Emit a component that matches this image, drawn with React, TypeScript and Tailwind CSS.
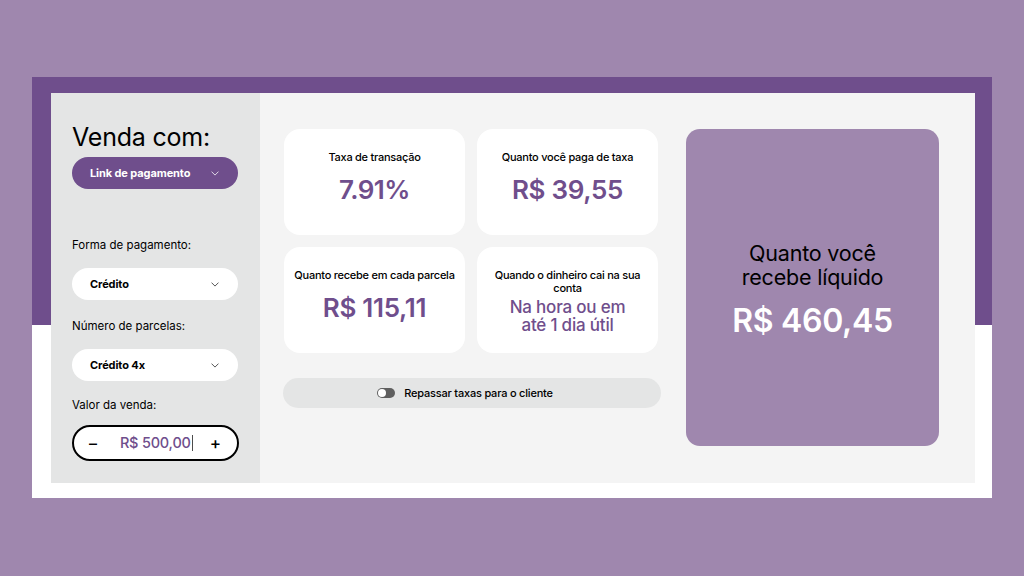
import React from "react";

const PURPLE = "text-[#6f4e8c]";

function Chevron({ className = "" }: { className?: string }) {
  return (
    <svg
      className={`w-[8px] h-[5px] ${className}`}
      viewBox="0 0 10 6"
      fill="none"
      stroke="currentColor"
      strokeWidth={1.2}
      strokeLinecap="round"
      strokeLinejoin="round"
    >
      <path d="M1 1l4 4 4-4" />
    </svg>
  );
}

function SelectPill({ label, dark }: { label: string; dark?: boolean }) {
  return (
    <div
      className={`w-[166px] h-[32px] rounded-full flex items-center justify-between pl-[18px] pr-[19px] ${
        dark ? "bg-[#6f4e8c] text-white" : "bg-white text-black"
      }`}
    >
      <span className="text-[11px] font-bold tracking-[-0.1px]">{label}</span>
      <Chevron className={dark ? "text-white/80" : "text-black/70"} />
    </div>
  );
}

function InfoCard({ title, children }: { title: React.ReactNode; children: React.ReactNode }) {
  return (
    <div className="bg-white rounded-[16px] h-[106px] flex flex-col items-center pt-[22px] px-1 text-center">
      <p className="text-[11px] font-medium text-black leading-[13px] tracking-[-0.25px] whitespace-nowrap">
        {title}
      </p>
      {children}
    </div>
  );
}

export default function App() {
  return (
    <div
      className="w-[1024px] h-[576px] bg-[#9f87ae] pt-[77px] pl-[32px]"
      style={{ fontFamily: "Inter, 'Noto Sans', sans-serif" }}
    >
      <div className="w-[960px] h-[421px] bg-[linear-gradient(to_bottom,#6f4e8c_248px,#ffffff_248px)] pt-[16px] pl-[19px]">
        <div className="w-[924px] h-[390px] bg-[#f4f4f4] flex">
          {/* Sidebar */}
          <aside className="w-[209px] bg-[#e4e5e5] pl-[21px] pt-[28px] flex flex-col">
            <h1 className="text-[25px] leading-[32px] text-black font-normal tracking-[-0.2px]">
              Venda com:
            </h1>
            <div className="mt-[4px]">
              <SelectPill label="Link de pagamento" dark />
            </div>
            <p className="text-[11.5px] text-black mt-[49px] leading-[14px]">Forma de pagamento:</p>
            <div className="mt-[16px]">
              <SelectPill label="Crédito" />
            </div>
            <p className="text-[11.5px] text-black mt-[19px] leading-[14px]">Número de parcelas:</p>
            <div className="mt-[16px]">
              <SelectPill label="Crédito 4x" />
            </div>
            <p className="text-[11.5px] text-black mt-[17px] leading-[14px]">Valor da venda:</p>
            <div className="mt-[13px] w-[167px] h-[36px] rounded-full border-2 border-black bg-white flex items-center justify-between pl-[15px] pr-[16px]">
              <span className="text-[16px] font-medium text-black leading-none">–</span>
              <span className={`text-[14.5px] font-medium ${PURPLE} flex items-center tracking-[-0.2px] ml-[6px]`}>
                R$ 500,00
                <span className="inline-block w-px h-[16px] bg-black/70 ml-px" />
              </span>
              <span className="text-[17px] font-medium text-black leading-none">+</span>
            </div>
          </aside>

          {/* Main */}
          <main className="flex pl-[23px] pt-[36px]">
            <div className="flex flex-col">
              <div className="grid grid-cols-[181px_181px] gap-[12px] pl-px">
                <InfoCard title="Taxa de transação">
                  <p className={`text-[26px] font-semibold ${PURPLE} mt-[10px] leading-[32px] tracking-[-0.5px]`}>7.91%</p>
                </InfoCard>
                <InfoCard title="Quanto você paga de taxa">
                  <p className={`text-[26px] font-semibold ${PURPLE} mt-[10px] leading-[32px] tracking-[-0.3px]`}>R$ 39,55</p>
                </InfoCard>
                <InfoCard title="Quanto recebe em cada parcela">
                  <p className={`text-[26px] font-semibold ${PURPLE} mt-[10px] leading-[32px] tracking-[-0.3px]`}>R$ 115,11</p>
                </InfoCard>
                <InfoCard
                  title={
                    <>
                      Quando o dinheiro cai na sua
                      <br />
                      conta
                    </>
                  }
                >
                  <p className={`text-[17px] font-medium ${PURPLE} mt-[3px] leading-[18px] tracking-[-0.2px]`}>
                    Na hora ou em
                    <br />
                    até 1 dia útil
                  </p>
                </InfoCard>
              </div>
              <div className="mt-[25px] w-[378px] h-[30px] rounded-full bg-[#e4e5e5] flex items-center justify-center gap-[9px] pr-[14px]">
                <span className="relative w-[18px] h-[10px] rounded-full bg-[#5f5f5f]">
                  <span className="absolute left-[1px] top-[1px] w-[8px] h-[8px] rounded-full bg-white" />
                </span>
                <span className="text-[11px] font-medium text-black tracking-[-0.2px]">Repassar taxas para o cliente</span>
              </div>
            </div>

            {/* Result */}
            <div className="ml-[25px] w-[253px] h-[317px] rounded-[14px] bg-[#9f87ae] flex flex-col items-center justify-center text-center pt-[6px]">
              <p className="text-[21.5px] leading-[24px] text-black font-normal tracking-[-0.2px]">
                Quanto você
                <br />
                recebe líquido
              </p>
              <p className="text-[32px] font-semibold text-white mt-[12px] leading-[40px] tracking-[-0.3px]">R$ 460,45</p>
            </div>
          </main>
        </div>
      </div>
    </div>
  );
}
